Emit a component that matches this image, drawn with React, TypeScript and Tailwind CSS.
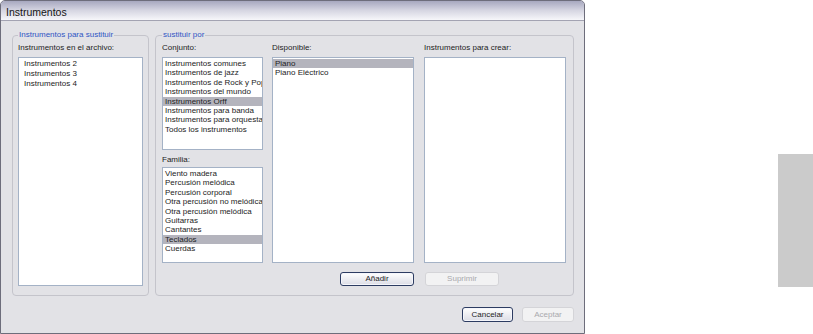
import React from 'react';

type ListProps = {
  items: string[];
  selected?: string;
  className: string;
  itemClass?: string;
};

function ListBox({ items, selected, className, itemClass = 'pl-[2px] leading-[9.4px]' }: ListProps) {
  return (
    <div className={`bg-white border border-[#a4b2c6] overflow-hidden pt-[1px] ${className}`}>
      {items.map((item) => (
        <div
          key={item}
          className={`whitespace-nowrap ${itemClass} ${item === selected ? 'bg-[#b4b4bd]' : ''}`}
        >
          {item}
        </div>
      ))}
    </div>
  );
}

function Button({ label, disabled, className }: { label: string; disabled?: boolean; className: string }) {
  return (
    <div
      className={`flex items-center justify-center rounded-[3px] border text-[8px] ${
        disabled
          ? 'border-[#d4d4d8] bg-[#f2f2f3] text-[#a9a9ad]'
          : 'border-[#2d3c62] bg-gradient-to-b from-white to-[#dcdde6] text-[#1e1e1e] shadow-[inset_0_0_0_1px_#f5f6fb]'
      } ${className}`}
    >
      {label}
    </div>
  );
}

const conjunto = [
  'Instrumentos comunes',
  'Instrumentos de jazz',
  'Instrumentos de Rock y Pop',
  'Instrumentos del mundo',
  'Instrumentos Orff',
  'Instrumentos para banda',
  'Instrumentos para orquesta',
  'Todos los instrumentos',
];

const familia = [
  'Viento madera',
  'Percusión melódica',
  'Percusión corporal',
  'Otra percusión no melódica',
  'Otra percusión melódica',
  'Guitarras',
  'Cantantes',
  'Teclados',
  'Cuerdas',
];

export default function App() {
  return (
    <div className="flex w-[813px] h-[334px] bg-white font-['Liberation_Sans',Arial,sans-serif] text-[8px] text-[#232323]">
      {/* Dialog */}
      <div className="flex flex-col w-[585px] h-[334px] shrink-0 border border-[#6d6d7b] rounded-t-[5px] bg-[#e2e2e6] overflow-hidden">
        <div className="h-[20px] shrink-0 flex items-center pt-[4px] px-[5px] border-b border-[#a3a3b2] bg-gradient-to-b from-[#a7a8bf] via-[#d6d6e2] to-[#f7f7fa] text-[10.5px] text-[#151515]">
          Instrumentos
        </div>

        <div className="flex-1 flex flex-col pl-[11px] pr-[10px] pt-[9px]">
          <div className="flex gap-[6px]">
            {/* Instrumentos para sustituir */}
            <fieldset className="w-[137px] h-[266px] flex flex-col border border-[#c4c4cb] rounded-[4px] px-[5px] pb-[9px]">
              <legend className="px-[1px] leading-[10px] text-[#2f55c4]">Instrumentos para sustituir</legend>
              <div className="pt-[3px] leading-[10px]">Instrumentos en el archivo:</div>
              <ListBox
                items={['Instrumentos 2', 'Instrumentos 3', 'Instrumentos 4']}
                className="mt-[4px] flex-1"
                itemClass="pl-[5px] leading-[10px]"
              />
            </fieldset>

            {/* sustituir por */}
            <fieldset className="w-[419px] h-[266px] flex flex-col border border-[#c4c4cb] rounded-[4px] pl-[6px] pr-[7px]">
              <legend className="px-[1px] leading-[10px] text-[#2f55c4]">sustituir por</legend>
              <div className="flex pt-[3px]">
                <div className="w-[101px] flex flex-col">
                  <div className="leading-[10px]">Conjunto:</div>
                  <ListBox items={conjunto} selected="Instrumentos Orff" className="mt-[4px] h-[93px]" />
                  <div className="mt-[5px] leading-[10px]">Familia:</div>
                  <ListBox items={familia} selected="Teclados" className="mt-[2px] h-[96px]" />
                </div>
                <div className="w-[142px] ml-[9px] flex flex-col">
                  <div className="leading-[10px]">Disponible:</div>
                  <ListBox items={['Piano', 'Piano Eléctrico']} selected="Piano" className="mt-[4px] h-[206px]" />
                </div>
                <div className="w-[142px] ml-[10px] flex flex-col">
                  <div className="leading-[10px]">Instrumentos para crear:</div>
                  <ListBox items={[]} className="mt-[4px] h-[206px]" />
                </div>
              </div>
              <div className="flex mt-[9px]">
                <div className="w-[252px] flex justify-end">
                  <Button label="Añadir" className="w-[74px] h-[14px]" />
                </div>
                <div className="ml-[11px]">
                  <Button label="Suprimir" disabled className="w-[74px] h-[14px]" />
                </div>
              </div>
            </fieldset>
          </div>

          <div className="flex justify-end gap-[9px] mt-[11px]">
            <Button label="Cancelar" className="w-[51px] h-[15px]" />
            <Button label="Aceptar" disabled className="w-[52px] h-[15px]" />
          </div>
        </div>
      </div>

      {/* outside the dialog */}
      <div className="flex-1 flex justify-end">
        <div className="mt-[154px] w-[35px] h-[133px] bg-[#cbcbcb]" />
      </div>
    </div>
  );
}
